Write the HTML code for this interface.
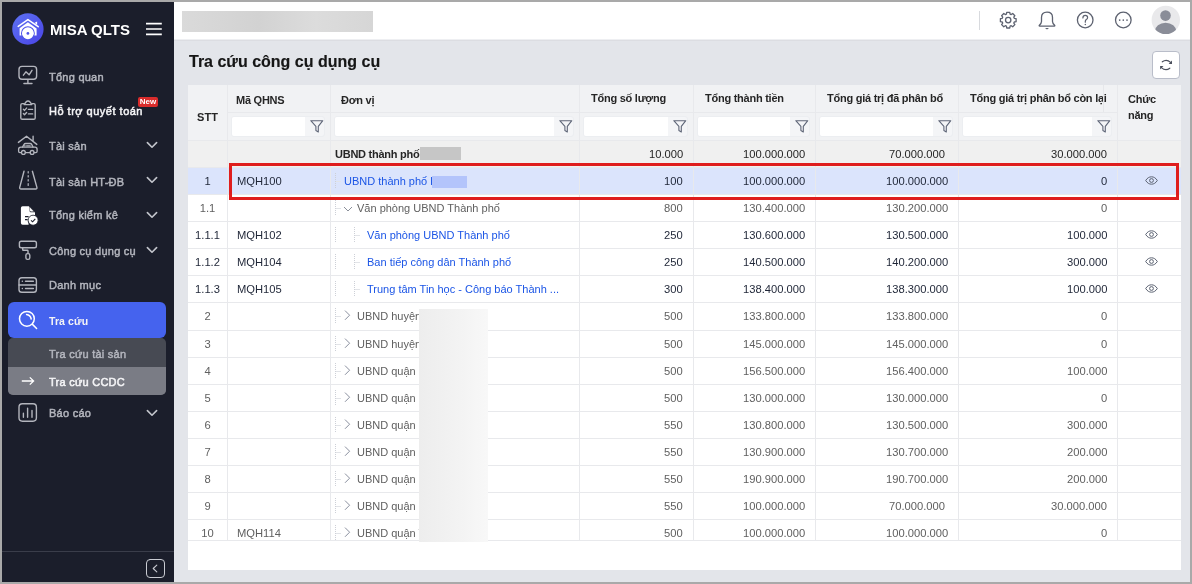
<!DOCTYPE html><html><head><meta charset="utf-8"><style>*{box-sizing:border-box;margin:0;padding:0}
html,body{width:1192px;height:584px;overflow:hidden}
body{-webkit-font-smoothing:antialiased;background:#a9a9a9;font-family:"Liberation Sans",sans-serif;position:relative}
#sb{position:absolute;left:2px;top:2px;width:172px;height:580px;background:#1b1e2b}
#sb .it{position:absolute;left:0;width:172px;height:30px}
#sb .tx{position:absolute;left:47px;top:0;line-height:30px;font-size:12px;color:#b3b5bd;white-space:nowrap;-webkit-text-stroke:0.25px #b3b5bd}
#sb .tx.w{color:#f4f4f6;-webkit-text-stroke:0.3px #f4f4f6}
#sb svg{position:absolute}
#top{position:absolute;left:174px;top:2px;width:1016px;height:37px;background:#fff}
#main{position:absolute;left:174px;top:40px;width:1016px;height:542px;background:#e3e5ea}
#title{will-change:transform;position:absolute;left:189px;top:51px;font-size:16px;font-weight:bold;color:#161616;-webkit-text-stroke:0.15px #161616;line-height:22px}
#refresh{position:absolute;left:1152px;top:51px;width:28px;height:28px;border:1px solid #b9bdc9;border-radius:4px;background:#fff}
#panel{position:absolute;left:188px;top:85px;width:993px;height:485px;background:#fff}
#tbl{position:absolute;left:188px;top:85px;width:993px;height:457px;overflow:hidden}
.hdr{position:absolute;left:0;top:0;width:993px;height:55px;background:#f1f2f4}
.ht{will-change:transform;position:absolute;height:28px;line-height:28px;font-size:11px;font-weight:bold;color:#262626;white-space:nowrap;letter-spacing:-0.25px}
.ht.stt{top:5px;height:55px;line-height:55px;text-align:center;letter-spacing:0}
.ht.fn{top:6px;line-height:16px;height:auto}
.fi{position:absolute;top:31px;height:21px;border-radius:3px;background:#f4f5f7;border:1px solid #eceef1}
.fib{position:absolute;left:0;top:0;bottom:0;right:19px;background:#fff;border-radius:2px 0 0 2px}
.fic{position:absolute;right:0px;top:2px}
.sum{position:absolute;left:0;width:993px;height:27px;background:#f0f0f0}
.row{position:absolute;left:0;width:993px;height:27px;background:#fff}
.row.sel{background:#dbe4fc}
.cell{will-change:transform;position:absolute;height:27px;line-height:27px;font-size:11.2px;color:#262626;white-space:nowrap}
.cell.c{text-align:center}
.cell.nm{font-size:11px}
.cell.b{font-weight:bold;letter-spacing:-0.25px}
.cell.gy{color:#606060}
.cell.dk{color:#1f2637}
.cell.bl{color:#1b55e6}
.vg{position:absolute;top:0;width:1px;height:456px;background:#e8e9ec}
.hg{position:absolute;left:0;width:993px;height:1px;background:#e8e9ec}
.vl{position:absolute;width:1px;height:15px;border-left:1px dotted #cdd0d7}
.hl{position:absolute;width:5px;height:1px;border-top:1px solid #e2e4e8}
.chev{position:absolute}
.eye{position:absolute}
.blurg{display:inline-block;width:41px;height:13px;background:#c6c6c6;vertical-align:-2px;margin-left:0.5px}
.blurb{display:inline-block;width:35px;height:12.5px;background:#b3c4fb;vertical-align:-3px;margin-left:-1px}
.blurw{position:absolute;left:231px;top:224px;width:69px;height:234px;background:linear-gradient(90deg,#ededed,#f3f3f3 60%,#f8f8f8)}
.red{position:absolute;left:41px;top:78px;width:950px;height:37px;border:3px solid #df1d1d}
#blurtop{position:absolute;left:182px;top:11px;width:191px;height:21px;background:linear-gradient(90deg,#dadada,#d2d2d2 40%,#dcdcdc 70%,#d6d6d6)}
.stx{will-change:transform;position:absolute;left:49px;line-height:30px;font-size:11px;white-space:nowrap;letter-spacing:0.25px}
.stx.g{color:#b4b6be;-webkit-text-stroke:0.45px #b4b6be}
.stx.w{color:#f4f4f6;-webkit-text-stroke:0.5px #f4f4f6}
.stx.b{font-weight:bold;font-size:10.5px;letter-spacing:0.1px;-webkit-text-stroke:0}
#ov{position:absolute;left:0;top:0;width:1192px;height:584px;z-index:10}
</style></head><body>
<div id="sb"></div>
<div style="position:absolute;left:2px;top:551px;width:172px;height:1px;background:#3a3d4a"></div>
<div style="position:absolute;left:8px;top:302px;width:158px;height:35.5px;background:#4563ee;border-radius:6px"></div>
<div style="position:absolute;left:8px;top:338.3px;width:158px;height:56.5px;background:#474a53;border-radius:5px;overflow:hidden"><div style="position:absolute;left:0;top:28.7px;width:158px;height:28px;background:#7a7c85"></div></div>
<div class="stx" style="left:50px;top:14.5px;font-size:15px;font-weight:bold;color:#fff;line-height:30px;letter-spacing:0;-webkit-text-stroke:0">MISA QLTS</div>
<div class="stx g" style="top:61.5px">Tổng quan</div>
<div class="stx w" style="top:96.4px;letter-spacing:0.5px">Hỗ trợ quyết toán</div>
<div style="position:absolute;left:138px;top:97px;width:20px;height:10px;background:#d92c2c;border-radius:2px;color:#fff;font-size:8px;font-weight:bold;line-height:10px;text-align:center">New</div>
<div class="stx g" style="top:130.5px">Tài sản</div>
<div class="stx g" style="top:166.5px">Tài sản HT-ĐB</div>
<div class="stx g" style="top:200.4px">Tổng kiểm kê</div>
<div class="stx g" style="top:235.5px">Công cụ dụng cụ</div>
<div class="stx g" style="top:270.4px">Danh mục</div>
<div class="stx w b" style="top:305.5px">Tra cứu</div>
<div class="stx g" style="top:339px">Tra cứu tài sản</div>
<div class="stx w" style="top:366.5px">Tra cứu CCDC</div>
<div class="stx g" style="top:398.1px">Báo cáo</div>

<div id="top"></div>
<div id="blurtop"></div>
<div id="main"></div>
<div style="position:absolute;left:174px;top:39px;width:1016px;height:1px;background:#eeeff2"></div><div style="position:absolute;left:174px;top:40px;width:1016px;height:1px;background:#dcdde2"></div>
<div id="title">Tra cứu công cụ dụng cụ</div>
<div id="refresh"></div>
<div id="panel"></div>

<div id="tbl"><div class="hdr"></div><div class="ht stt" style="left:0;width:39px">STT</div><div class="ht" style="top:1px;left:48px">Mã QHNS</div><div class="fi" style="left:43px;width:94px"><span class="fib"></span><svg class="fic" viewBox="0 0 14 14" width="14" height="14"><path d="M0.8 1.7H12.8L8.3 7.4V13L5.9 11.6V7.4Z" fill="none" stroke="#5f6678" stroke-width="1.1" stroke-linejoin="round"/></svg></div><div class="ht" style="top:1px;left:153px">Đơn vị</div><div class="fi" style="left:146px;width:240px"><span class="fib"></span><svg class="fic" viewBox="0 0 14 14" width="14" height="14"><path d="M0.8 1.7H12.8L8.3 7.4V13L5.9 11.6V7.4Z" fill="none" stroke="#5f6678" stroke-width="1.1" stroke-linejoin="round"/></svg></div><div class="ht" style="top:-1px;left:403px">Tổng số lượng</div><div class="fi" style="left:395px;width:105px"><span class="fib"></span><svg class="fic" viewBox="0 0 14 14" width="14" height="14"><path d="M0.8 1.7H12.8L8.3 7.4V13L5.9 11.6V7.4Z" fill="none" stroke="#5f6678" stroke-width="1.1" stroke-linejoin="round"/></svg></div><div class="ht" style="top:-1px;left:517px">Tổng thành tiền</div><div class="fi" style="left:509px;width:113px"><span class="fib"></span><svg class="fic" viewBox="0 0 14 14" width="14" height="14"><path d="M0.8 1.7H12.8L8.3 7.4V13L5.9 11.6V7.4Z" fill="none" stroke="#5f6678" stroke-width="1.1" stroke-linejoin="round"/></svg></div><div class="ht" style="top:-1px;left:639px">Tổng giá trị đã phân bổ</div><div class="fi" style="left:631px;width:134px"><span class="fib"></span><svg class="fic" viewBox="0 0 14 14" width="14" height="14"><path d="M0.8 1.7H12.8L8.3 7.4V13L5.9 11.6V7.4Z" fill="none" stroke="#5f6678" stroke-width="1.1" stroke-linejoin="round"/></svg></div><div class="ht" style="top:-1px;left:782px">Tổng giá trị phân bổ còn lại</div><div class="fi" style="left:774px;width:150px"><span class="fib"></span><svg class="fic" viewBox="0 0 14 14" width="14" height="14"><path d="M0.8 1.7H12.8L8.3 7.4V13L5.9 11.6V7.4Z" fill="none" stroke="#5f6678" stroke-width="1.1" stroke-linejoin="round"/></svg></div><div class="ht fn" style="left:940px">Chức<br>năng</div><div class="sum" style="top:55px"></div><div class="cell b nm" style="top:56px;left:147px">UBND thành phố<span class="blurg"></span></div><div class="cell r" style="top:56px;right:498px">10.000</div><div class="cell r" style="top:56px;right:376px">100.000.000</div><div class="cell r" style="top:56px;right:236px">70.000.000</div><div class="cell r" style="top:56px;right:74px">30.000.000</div><div class="row sel" style="top:82px"></div><div class="cell c dk" style="top:83px;left:0;width:39px">1</div><div class="cell dk" style="top:83px;left:49px">MQH100</div><div class="vl" style="top:88px;left:147px"></div><div class="hl" style="top:96px;left:148px"></div><div class="cell nm bl" style="top:83px;left:156px">UBND thành phố l<span class="blurb"></span></div><div class="cell r dk" style="top:83px;right:498px">100</div><div class="cell r dk" style="top:83px;right:376px">100.000.000</div><div class="cell r dk" style="top:83px;right:233px">100.000.000</div><div class="cell r dk" style="top:83px;right:74px">0</div><svg class="eye" style="top:91px;left:957px" width="13" height="9" viewBox="0 0 13 9"><path d="M0.7 4.5C2.2 2 4.2 0.8 6.5 0.8S10.8 2 12.3 4.5C10.8 7 8.8 8.2 6.5 8.2S2.2 7 0.7 4.5z" fill="none" stroke="#5c6372" stroke-width="1"/><circle cx="6.5" cy="4.5" r="1.9" fill="none" stroke="#5c6372" stroke-width="1"/></svg><div class="row" style="top:109px"></div><div class="cell c gy" style="top:110px;left:0;width:39px">1.1</div><div class="vl" style="top:115px;left:147px"></div><div class="hl" style="top:123px;left:148px"></div><svg class="chev" style="top:121px;left:155px" width="10" height="6" viewBox="0 0 10 6"><path d="M1 1l4 4 4-4" fill="none" stroke="#8a8f99" stroke-width="1"/></svg><div class="cell nm gy" style="top:110px;left:169px">Văn phòng UBND Thành phố</div><div class="cell r gy" style="top:110px;right:498px">800</div><div class="cell r gy" style="top:110px;right:376px">130.400.000</div><div class="cell r gy" style="top:110px;right:233px">130.200.000</div><div class="cell r gy" style="top:110px;right:74px">0</div><div class="row" style="top:136px"></div><div class="cell c dk" style="top:137px;left:0;width:39px">1.1.1</div><div class="cell dk" style="top:137px;left:49px">MQH102</div><div class="vl" style="top:142px;left:147px"></div><div class="vl" style="top:142px;left:166px"></div><div class="hl" style="top:150px;left:167px"></div><div class="cell nm bl" style="top:137px;left:179px">Văn phòng UBND Thành phố</div><div class="cell r dk" style="top:137px;right:498px">250</div><div class="cell r dk" style="top:137px;right:376px">130.600.000</div><div class="cell r dk" style="top:137px;right:233px">130.500.000</div><div class="cell r dk" style="top:137px;right:74px">100.000</div><svg class="eye" style="top:145px;left:957px" width="13" height="9" viewBox="0 0 13 9"><path d="M0.7 4.5C2.2 2 4.2 0.8 6.5 0.8S10.8 2 12.3 4.5C10.8 7 8.8 8.2 6.5 8.2S2.2 7 0.7 4.5z" fill="none" stroke="#5c6372" stroke-width="1"/><circle cx="6.5" cy="4.5" r="1.9" fill="none" stroke="#5c6372" stroke-width="1"/></svg><div class="row" style="top:163px"></div><div class="cell c dk" style="top:164px;left:0;width:39px">1.1.2</div><div class="cell dk" style="top:164px;left:49px">MQH104</div><div class="vl" style="top:169px;left:147px"></div><div class="vl" style="top:169px;left:166px"></div><div class="hl" style="top:177px;left:167px"></div><div class="cell nm bl" style="top:164px;left:179px">Ban tiếp công dân Thành phố</div><div class="cell r dk" style="top:164px;right:498px">250</div><div class="cell r dk" style="top:164px;right:376px">140.500.000</div><div class="cell r dk" style="top:164px;right:233px">140.200.000</div><div class="cell r dk" style="top:164px;right:74px">300.000</div><svg class="eye" style="top:172px;left:957px" width="13" height="9" viewBox="0 0 13 9"><path d="M0.7 4.5C2.2 2 4.2 0.8 6.5 0.8S10.8 2 12.3 4.5C10.8 7 8.8 8.2 6.5 8.2S2.2 7 0.7 4.5z" fill="none" stroke="#5c6372" stroke-width="1"/><circle cx="6.5" cy="4.5" r="1.9" fill="none" stroke="#5c6372" stroke-width="1"/></svg><div class="row" style="top:190px"></div><div class="cell c dk" style="top:191px;left:0;width:39px">1.1.3</div><div class="cell dk" style="top:191px;left:49px">MQH105</div><div class="vl" style="top:196px;left:147px"></div><div class="vl" style="top:196px;left:166px"></div><div class="hl" style="top:204px;left:167px"></div><div class="cell nm bl" style="top:191px;left:179px">Trung tâm Tin học - Công báo Thành ...</div><div class="cell r dk" style="top:191px;right:498px">300</div><div class="cell r dk" style="top:191px;right:376px">138.400.000</div><div class="cell r dk" style="top:191px;right:233px">138.300.000</div><div class="cell r dk" style="top:191px;right:74px">100.000</div><svg class="eye" style="top:199px;left:957px" width="13" height="9" viewBox="0 0 13 9"><path d="M0.7 4.5C2.2 2 4.2 0.8 6.5 0.8S10.8 2 12.3 4.5C10.8 7 8.8 8.2 6.5 8.2S2.2 7 0.7 4.5z" fill="none" stroke="#5c6372" stroke-width="1"/><circle cx="6.5" cy="4.5" r="1.9" fill="none" stroke="#5c6372" stroke-width="1"/></svg><div class="row" style="top:217px"></div><div class="cell c gy" style="top:218px;left:0;width:39px">2</div><div class="vl" style="top:223px;left:147px"></div><div class="hl" style="top:231px;left:148px"></div><svg class="chev" style="top:225px;left:156px" width="7" height="11" viewBox="0 0 7 11"><path d="M1 0.6L5.6 5.2L1 9.8" fill="none" stroke="#7a8192" stroke-width="0.9"/></svg><div class="cell nm gy" style="top:218px;left:169px">UBND huyện</div><div class="cell r gy" style="top:218px;right:498px">500</div><div class="cell r gy" style="top:218px;right:376px">133.800.000</div><div class="cell r gy" style="top:218px;right:233px">133.800.000</div><div class="cell r gy" style="top:218px;right:74px">0</div><div class="row" style="top:245px"></div><div class="cell c gy" style="top:246px;left:0;width:39px">3</div><div class="vl" style="top:251px;left:147px"></div><div class="hl" style="top:259px;left:148px"></div><svg class="chev" style="top:253px;left:156px" width="7" height="11" viewBox="0 0 7 11"><path d="M1 0.6L5.6 5.2L1 9.8" fill="none" stroke="#7a8192" stroke-width="0.9"/></svg><div class="cell nm gy" style="top:246px;left:169px">UBND huyện</div><div class="cell r gy" style="top:246px;right:498px">500</div><div class="cell r gy" style="top:246px;right:376px">145.000.000</div><div class="cell r gy" style="top:246px;right:233px">145.000.000</div><div class="cell r gy" style="top:246px;right:74px">0</div><div class="row" style="top:272px"></div><div class="cell c gy" style="top:273px;left:0;width:39px">4</div><div class="vl" style="top:278px;left:147px"></div><div class="hl" style="top:286px;left:148px"></div><svg class="chev" style="top:280px;left:156px" width="7" height="11" viewBox="0 0 7 11"><path d="M1 0.6L5.6 5.2L1 9.8" fill="none" stroke="#7a8192" stroke-width="0.9"/></svg><div class="cell nm gy" style="top:273px;left:169px">UBND quận l</div><div class="cell r gy" style="top:273px;right:498px">500</div><div class="cell r gy" style="top:273px;right:376px">156.500.000</div><div class="cell r gy" style="top:273px;right:233px">156.400.000</div><div class="cell r gy" style="top:273px;right:74px">100.000</div><div class="row" style="top:299px"></div><div class="cell c gy" style="top:300px;left:0;width:39px">5</div><div class="vl" style="top:305px;left:147px"></div><div class="hl" style="top:313px;left:148px"></div><svg class="chev" style="top:307px;left:156px" width="7" height="11" viewBox="0 0 7 11"><path d="M1 0.6L5.6 5.2L1 9.8" fill="none" stroke="#7a8192" stroke-width="0.9"/></svg><div class="cell nm gy" style="top:300px;left:169px">UBND quận l</div><div class="cell r gy" style="top:300px;right:498px">500</div><div class="cell r gy" style="top:300px;right:376px">130.000.000</div><div class="cell r gy" style="top:300px;right:233px">130.000.000</div><div class="cell r gy" style="top:300px;right:74px">0</div><div class="row" style="top:326px"></div><div class="cell c gy" style="top:327px;left:0;width:39px">6</div><div class="vl" style="top:332px;left:147px"></div><div class="hl" style="top:340px;left:148px"></div><svg class="chev" style="top:334px;left:156px" width="7" height="11" viewBox="0 0 7 11"><path d="M1 0.6L5.6 5.2L1 9.8" fill="none" stroke="#7a8192" stroke-width="0.9"/></svg><div class="cell nm gy" style="top:327px;left:169px">UBND quận (</div><div class="cell r gy" style="top:327px;right:498px">550</div><div class="cell r gy" style="top:327px;right:376px">130.800.000</div><div class="cell r gy" style="top:327px;right:233px">130.500.000</div><div class="cell r gy" style="top:327px;right:74px">300.000</div><div class="row" style="top:353px"></div><div class="cell c gy" style="top:354px;left:0;width:39px">7</div><div class="vl" style="top:359px;left:147px"></div><div class="hl" style="top:367px;left:148px"></div><svg class="chev" style="top:361px;left:156px" width="7" height="11" viewBox="0 0 7 11"><path d="M1 0.6L5.6 5.2L1 9.8" fill="none" stroke="#7a8192" stroke-width="0.9"/></svg><div class="cell nm gy" style="top:354px;left:169px">UBND quận l</div><div class="cell r gy" style="top:354px;right:498px">550</div><div class="cell r gy" style="top:354px;right:376px">130.900.000</div><div class="cell r gy" style="top:354px;right:233px">130.700.000</div><div class="cell r gy" style="top:354px;right:74px">200.000</div><div class="row" style="top:380px"></div><div class="cell c gy" style="top:381px;left:0;width:39px">8</div><div class="vl" style="top:386px;left:147px"></div><div class="hl" style="top:394px;left:148px"></div><svg class="chev" style="top:388px;left:156px" width="7" height="11" viewBox="0 0 7 11"><path d="M1 0.6L5.6 5.2L1 9.8" fill="none" stroke="#7a8192" stroke-width="0.9"/></svg><div class="cell nm gy" style="top:381px;left:169px">UBND quận l</div><div class="cell r gy" style="top:381px;right:498px">550</div><div class="cell r gy" style="top:381px;right:376px">190.900.000</div><div class="cell r gy" style="top:381px;right:233px">190.700.000</div><div class="cell r gy" style="top:381px;right:74px">200.000</div><div class="row" style="top:407px"></div><div class="cell c gy" style="top:408px;left:0;width:39px">9</div><div class="vl" style="top:413px;left:147px"></div><div class="hl" style="top:421px;left:148px"></div><svg class="chev" style="top:415px;left:156px" width="7" height="11" viewBox="0 0 7 11"><path d="M1 0.6L5.6 5.2L1 9.8" fill="none" stroke="#7a8192" stroke-width="0.9"/></svg><div class="cell nm gy" style="top:408px;left:169px">UBND quận l</div><div class="cell r gy" style="top:408px;right:498px">550</div><div class="cell r gy" style="top:408px;right:376px">100.000.000</div><div class="cell r gy" style="top:408px;right:236px">70.000.000</div><div class="cell r gy" style="top:408px;right:74px">30.000.000</div><div class="row" style="top:434px"></div><div class="cell c gy" style="top:435px;left:0;width:39px">10</div><div class="cell gy" style="top:435px;left:49px">MQH114</div><div class="vl" style="top:440px;left:147px"></div><div class="hl" style="top:448px;left:148px"></div><svg class="chev" style="top:442px;left:156px" width="7" height="11" viewBox="0 0 7 11"><path d="M1 0.6L5.6 5.2L1 9.8" fill="none" stroke="#7a8192" stroke-width="0.9"/></svg><div class="cell nm gy" style="top:435px;left:169px">UBND quận T</div><div class="cell r gy" style="top:435px;right:498px">500</div><div class="cell r gy" style="top:435px;right:376px">100.000.000</div><div class="cell r gy" style="top:435px;right:233px">100.000.000</div><div class="cell r gy" style="top:435px;right:74px">0</div><div class="vg" style="left:39px"></div><div class="vg" style="left:142px"></div><div class="vg" style="left:391px"></div><div class="vg" style="left:505px"></div><div class="vg" style="left:627px"></div><div class="vg" style="left:770px"></div><div class="vg" style="left:929px"></div><div class="hg hh" style="top:27px;left:39px;width:890px"></div><div class="hg" style="top:55px"></div><div class="hg" style="top:82px"></div><div class="hg" style="top:109px"></div><div class="hg" style="top:136px"></div><div class="hg" style="top:163px"></div><div class="hg" style="top:190px"></div><div class="hg" style="top:217px"></div><div class="hg" style="top:245px"></div><div class="hg" style="top:272px"></div><div class="hg" style="top:299px"></div><div class="hg" style="top:326px"></div><div class="hg" style="top:353px"></div><div class="hg" style="top:380px"></div><div class="hg" style="top:407px"></div><div class="hg" style="top:434px"></div><div class="hg" style="top:455px"></div><div style="position:absolute;left:915px;top:0;width:1px;height:27px;background:#e6e7ea"></div><div class="blurw"></div><div class="red"></div></div>
<svg id="ov" width="1192" height="584" viewBox="0 0 1192 584">
<defs><linearGradient id="lg" x1="0" y1="0" x2="1" y2="1"><stop offset="0" stop-color="#5d72f3"/><stop offset="1" stop-color="#4a44e6"/></linearGradient></defs>
<!-- logo -->
<circle cx="27.9" cy="29" r="15.7" fill="url(#lg)"/>
<path d="M18.2 26.4L27.9 19.6L38.2 26.7" fill="none" stroke="#fff" stroke-width="1.5" stroke-linejoin="round" stroke-linecap="round"/>
<path d="M34.6 22.8L37.1 21.4V25z" fill="#fff"/>
<path d="M19.6 28.2L27.9 22.2L36.6 28.4V35.5H19.6z" fill="#fff"/>
<circle cx="27.9" cy="33.2" r="6.4" fill="none" stroke="#4f55ea" stroke-width="1.1"/>
<circle cx="27.9" cy="33.6" r="5.6" fill="#fff"/>
<circle cx="27.9" cy="33.4" r="1.4" fill="#4f55ea"/>
<!-- hamburger -->
<g stroke="#fff" stroke-width="1.7"><path d="M146 23.6h15.8M146 29h15.8M146 34.4h15.8"/></g>
<g fill="none" stroke="#b3b5bd" stroke-width="1.4" stroke-linecap="round" stroke-linejoin="round">
<!-- monitor -->
<rect x="19" y="66.4" width="17.6" height="12.8" rx="3"/>
<path d="M27.9 79.6V83.4M23.9 83.5H32"/>
<path d="M23.4 75.2L25.9 71.8L29.1 74.8L32 70.3"/>
<!-- clipboard -->
<path d="M24 103.6H22.3Q20.8 103.6 20.8 105.1V118Q20.8 119.3 22.3 119.3H33.8Q35.2 119.3 35.2 118V105.1Q35.2 103.6 33.8 103.6H32"/>
<path d="M24.2 104.6H31.8L30.2 102.2Q28 99.8 25.8 102.2Z"/>
<path d="M23.4 109.2L24.5 110.4L26.6 108.1M23.4 113.6L24.5 114.8L26.6 112.5M28.4 109.4H32.6M28.4 113.9H32.6"/>
<!-- house+car -->
<path d="M18.4 142.4L26.5 136.2L36.8 144.4M33.1 136.2V140.6"/>
<path d="M21.3 152.6H20Q18.6 152.6 18.6 151.2V149.4Q18.6 147.2 20.8 147.2H35Q37.1 147.2 37.1 149.4V151.2Q37.1 152.6 35.8 152.6H34.2M25.5 152.6H29.9" stroke-width="1.3"/>
<path d="M22.5 147.1L23.9 144.6Q24.5 143.5 25.7 143.5H30.1Q31.2 143.5 31.8 144.6L33 147.1" stroke-width="1.3"/>
<circle cx="23.4" cy="152.4" r="1.9" stroke-width="1.3"/><circle cx="32.1" cy="152.4" r="1.9" stroke-width="1.3"/>
<path d="M24.2 145.8H25.2M26.6 145.8H30.2" stroke-width="1.2"/>
<!-- road -->
<path d="M24 171.3L19.7 187.4Q19.5 189 21 189H35.7Q37.2 189 36.9 187.4L32.4 171.3"/>
<path d="M28.2 171.5V173M28.2 175.5V177M28.2 179.5V181M28.2 183.5V185.5" stroke-width="1.2"/>
<!-- roller -->
<rect x="19.4" y="241.3" width="17" height="6.4" rx="1.8"/>
<path d="M22.7 247.9V249.7Q22.7 250.3 23.3 250.3H27.4Q28 250.3 28 250.9V253"/>
<rect x="25.9" y="253.6" width="3.9" height="5.8" rx="1.6"/>
<!-- danh muc -->
<rect x="19" y="277.8" width="17.4" height="14.4" rx="2.8"/>
<path d="M19 285H36.4M25.5 281.3H33.4M25.5 288.5H33.4M22.3 281.3H22.4M22.3 288.5H22.4"/>
<!-- bao cao -->
<rect x="19" y="403.8" width="17.4" height="17.4" rx="3.4"/>
<path d="M23.4 413.3V417.3M27.6 408.3V417.3M32 410.5V417.3"/>
<!-- chevrons -->
<path d="M147.4 142.6L152 147.2L156.6 142.6M147.4 177.6L152 182.2L156.6 177.6M147.4 212.6L152 217.2L156.6 212.6M147.4 247.6L152 252.2L156.6 247.6M147.4 410.6L152 415.2L156.6 410.6" stroke="#c2c4cb" stroke-width="1.6"/>
<!-- collapse btn -->
<rect x="146.5" y="559.5" width="18" height="18" rx="3.5" stroke="#c9cbd2" stroke-width="1"/>
<path d="M156.8 565.2L153.2 568.5L156.8 571.8" stroke="#c9cbd2" stroke-width="1.1"/>
</g>
<!-- tong kiem ke -->
<path d="M22.6 206.3H28.8L35 212.6V215.8A5.6 5.6 0 0 0 28.6 223.8V224.7H22.6Q20.9 224.7 20.9 223V208Q20.9 206.3 22.6 206.3Z" fill="#fff"/>
<path d="M29.6 206.6V211Q29.6 212.2 30.8 212.2H34.8Z" fill="#1b1e2b"/>
<path d="M30 207.6L33.8 211.4H31Q30 211.4 30 210.4Z" fill="#fff"/>
<path d="M25 216.6H28.6M25 219.7H27.6" stroke="#1b1e2b" stroke-width="1.2"/>
<circle cx="33.1" cy="220.2" r="5" fill="#fff" stroke="#1b1e2b" stroke-width="0.8"/>
<path d="M31 220.3L32.6 221.8L35.3 218.8" fill="none" stroke="#1b1e2b" stroke-width="1.1"/>
<!-- search -->
<g fill="none" stroke="#fff" stroke-width="1.5" stroke-linecap="round">
<circle cx="26.9" cy="318.8" r="7.4"/>
<path d="M32.5 324.4L36.6 328.5"/>
<path d="M26.6 314.6Q30.4 315.2 31.2 319"/>
</g>
<!-- arrow -->
<path d="M21.8 381H33.6M29.8 377.4L33.6 381L29.8 384.6" fill="none" stroke="#fff" stroke-width="1.3"/>
<!-- top bar icons -->
<path d="M979.5 11V30" stroke="#d8dade" stroke-width="1"/>
<g fill="none" stroke="#5d6270" stroke-width="1.3" stroke-linejoin="round">
<path d="M1006.72 12.30 L1009.78 12.30 L1010.09 14.13 L1011.21 14.59 L1012.72 13.52 L1014.88 15.68 L1013.81 17.19 L1014.27 18.31 L1016.10 18.62 L1016.10 21.68 L1014.27 21.99 L1013.81 23.11 L1014.88 24.62 L1012.72 26.78 L1011.21 25.71 L1010.09 26.17 L1009.78 28.00 L1006.72 28.00 L1006.41 26.17 L1005.29 25.71 L1003.78 26.78 L1001.62 24.62 L1002.69 23.11 L1002.23 21.99 L1000.40 21.68 L1000.40 18.62 L1002.23 18.31 L1002.69 17.19 L1001.62 15.68 L1003.78 13.52 L1005.29 14.59 L1006.41 14.13Z"/>
<circle cx="1008.2" cy="20.1" r="2.7"/>
<path d="M1041.5 17.5Q1041.5 12.2 1047 12.2Q1052.5 12.2 1052.5 17.5V21.5Q1052.5 23.2 1054.6 25.2Q1055.3 26 1054.2 26.2H1039.8Q1038.7 26 1039.4 25.2Q1041.5 23.2 1041.5 21.5Z"/>
<circle cx="1085.2" cy="20" r="7.8"/>
<circle cx="1123.3" cy="20" r="7.8"/>
</g>
<path d="M1045 27.9H1049L1047 29.6Z" fill="#5d6270"/>
<path d="M1082.9 17.9Q1082.9 15.3 1085.3 15.3Q1087.6 15.3 1087.6 17.5Q1087.6 18.8 1086.3 19.6Q1085.3 20.3 1085.3 21.6V22.2" fill="none" stroke="#5d6270" stroke-width="1.2" stroke-linecap="round"/>
<circle cx="1085.3" cy="24.4" r="0.75" fill="#5d6270"/>
<g fill="#5d6270"><circle cx="1119.7" cy="20.1" r="0.85"/><circle cx="1123.3" cy="20.1" r="0.85"/><circle cx="1127" cy="20.1" r="0.85"/></g>
<circle cx="1165.8" cy="19.9" r="14.2" fill="#e9e9eb"/>
<clipPath id="av"><circle cx="1165.8" cy="19.9" r="14.2"/></clipPath>
<circle cx="1165.5" cy="15.6" r="5.3" fill="#8a8d98"/>
<ellipse cx="1165.6" cy="31.5" rx="10.8" ry="8.8" fill="#8a8d98" clip-path="url(#av)"/>
<!-- refresh -->
<g fill="none" stroke="#4a4f5c" stroke-width="1.2" stroke-linecap="round">
<path d="M1162.3 61.8Q1166.5 58.7 1170.6 62.4"/>
<path d="M1169.8 68.2Q1165.6 71.3 1161.4 67.6"/>
</g>
<path d="M1172 60.4L1172 63.9L1168.6 63.9Z" fill="#4a4f5c"/>
<path d="M1160.1 69.6L1160.1 66.1L1163.5 66.1Z" fill="#4a4f5c"/>
</svg>

</body></html>
